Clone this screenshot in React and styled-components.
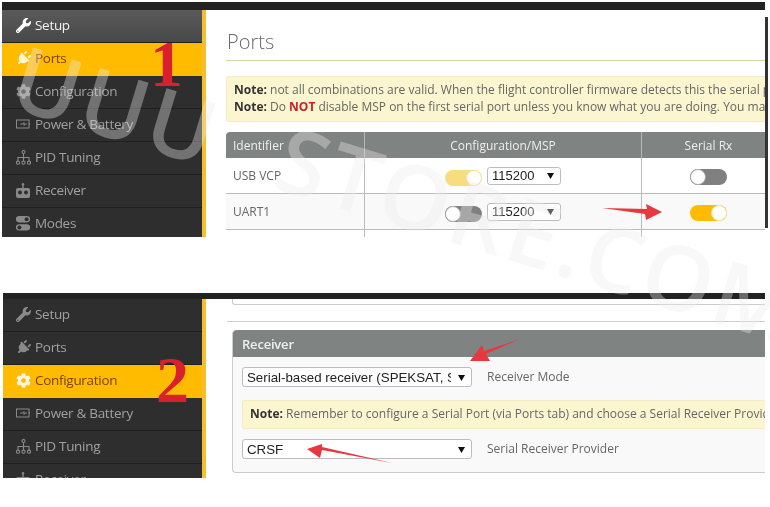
import React from "react";
import styled, { createGlobalStyle } from "styled-components";
import { FaWrench, FaPlug, FaCog } from "react-icons/fa";

const Global = createGlobalStyle`
  html, body { margin: 0; padding: 0; background: #fff; }
  body { font-family: "Open Sans", "Liberation Sans", sans-serif; color: #555; }
`;

const Page = styled.div`
  position: relative;
  width: 770px;
  height: 507px;
  overflow: hidden;
  background: #fff;
  padding-top: 2px;
  box-sizing: border-box;
  filter: blur(0.35px);
`;

const Shot = styled.section`
  position: relative;
  width: ${p => p.$w}px;
  height: ${p => p.$h}px;
  margin-left: ${p => p.$left}px;
  margin-top: ${p => p.$top || 0}px;
  display: flex;
  flex-direction: column;
  overflow: hidden;
  background: #fff;
`;

const TopBar = styled.div`
  flex: 0 0 ${p => p.$h}px;
  background: #222;
`;

const Body = styled.div`
  flex: 1;
  min-height: 0;
  display: flex;
`;

const Sidebar = styled.nav`
  flex: 0 0 ${p => p.$w}px;
  box-sizing: border-box;
  background: #2e2e2e;
  border-right: 4px solid #f6bd2f;
  overflow: hidden;
`;

const NavItem = styled.div`
  height: 30px;
  padding: 0 0 2px ${p => p.$inset}px;
  border-bottom: 1px solid ${p => (p.$active ? "#ffbb00" : "#1f1f1f")};
  display: flex;
  align-items: center;
  gap: 4px;
  font-size: 13.5px;
  letter-spacing: -0.3px;
  color: ${p => (p.$active ? "#7a4300" : p.$lit ? "#f2f2f2" : "#a0a0a0")};
  background: ${p => (p.$active ? "#ffbb00" : p.$lit ? "linear-gradient(#5a5a5a, #484848)" : "#2e2e2e")};
`;

const IconSlot = styled.span`
  flex: 0 0 16px;
  width: 16px;
  height: 16px;
  display: flex;
  align-items: center;
  justify-content: center;
  color: ${p => (p.$active ? "#fff6d8" : p.$lit ? "#fff" : "#8a8a8a")};
  font-size: 15px;
`;

const Content = styled.main`
  flex: 1;
  min-width: 0;
  padding: ${p => p.$pad};
  overflow: hidden;
  position: relative;
`;

const Title = styled.h1`
  margin: 0;
  padding: 0 0 4px 1px;
  height: 45px;
  box-sizing: border-box;
  display: flex;
  align-items: flex-end;
  font-size: 20px;
  font-weight: 300;
  line-height: 28px;
  color: #6a6a6a;
  border-bottom: 1px solid #d9d6a6;
`;

const Note = styled.div`
  box-sizing: border-box;
  white-space: nowrap;
  overflow: hidden;
  background: #fbf6d0;
  border: 1px solid #f2ecc4;
  border-right: 0;
  border-radius: 3px 0 0 3px;
  font-size: 12px;
  line-height: 16.5px;
  color: #666;
  padding: ${p => p.$pad};
  margin: ${p => p.$margin};
  height: ${p => p.$h}px;
  b { color: #333; font-weight: 700; }
  em { color: #c8202c; font-style: normal; font-weight: 700; }
`;

const PortsTable = styled.div`
  width: 549px;
  display: grid;
  grid-template-columns: 138px 277px 134px;
  border-radius: 4px 0 0 0;
  overflow: hidden;
`;

const HeadCell = styled.div`
  height: 26px;
  background: #7f8482;
  color: #eee;
  font-size: 12px;
  display: flex;
  align-items: center;
  justify-content: ${p => (p.$left ? "flex-start" : "center")};
  padding-left: ${p => (p.$left ? "7px" : "0")};
  border-left: ${p => (p.$left ? "0" : "1px solid #b5b8b6")};
  box-sizing: border-box;
`;

const Cell = styled.div`
  height: 36px;
  box-sizing: border-box;
  border-bottom: 1px solid #bbb;
  border-left: ${p => (p.$left ? "0" : "1px solid #bbb")};
  background: ${p => (p.$alt ? "#f9f9f9" : "#fff")};
  display: flex;
  align-items: center;
  justify-content: ${p => (p.$left ? "flex-start" : "center")};
  padding-left: ${p => (p.$left ? "7px" : "0")};
  font-size: 12px;
  color: #666;
  gap: 5px;
`;

const ToggleShell = styled.span`
  display: inline-block;
  position: relative;
  width: 37px;
  height: 16px;
  margin-top: ${p => p.$drop}px;
  border-radius: 8px;
  background: ${p => (p.$on ? (p.$pale ? "#f7dc80" : "#ffbb00") : "#808080")};
`;

const Knob = styled.span`
  position: absolute;
  top: 0;
  ${p => (p.$on ? "right: 0;" : "left: 0;")}
  width: 16px;
  height: 16px;
  border-radius: 50%;
  box-sizing: border-box;
  background: #fff;
  border: 1px solid ${p => (p.$on ? "#f5e3a5" : "#aaa")};
`;

const Toggle = ({ on, pale, drop = 4 }) => (
  <ToggleShell $on={on} $pale={pale} $drop={drop}>
    <Knob $on={on} />
  </ToggleShell>
);

const SelectBox = styled.div`
  box-sizing: border-box;
  width: ${p => p.$w}px;
  height: ${p => p.$h}px;
  flex: 0 0 auto;
  display: flex;
  align-items: center;
  background: #fff;
  border: 1px solid #bdbdbd;
  border-radius: 3px;
  padding: 0 6px 0 4px;
  font-family: "Liberation Sans", Arial, sans-serif;
  font-size: ${p => p.$size}px;
  color: #222;
  span { overflow: hidden; white-space: nowrap; flex: 1; }
  svg { flex: 0 0 7px; margin-left: 7px; }
`;

const Caret = () => (
  <svg width="7" height="7" viewBox="0 0 7 7"><path d="M0 1h7L3.5 7z" fill="#111" /></svg>
);

const Select = ({ w, h, size, children }) => (
  <SelectBox $w={w} $h={h} $size={size}>
    <span>{children}</span>
    <Caret />
  </SelectBox>
);

const ClippedBox = styled.div`
  height: 6px;
  margin-left: 5px;
  box-sizing: border-box;
  border: 1px solid #ccc;
  border-top: 0;
  border-right: 0;
  border-radius: 0 0 0 3px;
`;

const Rule = styled.hr`
  margin: 16px 0 8px;
  border: 0;
  border-top: 1px solid #ccc;
`;

const Panel = styled.div`
  margin-left: 5px;
  height: 143px;
  box-sizing: border-box;
  border: 1px solid #ccc;
  border-top: 0;
  border-right: 0;
  border-radius: 4px 0 0 4px;
  background: #f9f9f9;
`;

const PanelHead = styled.div`
  height: 27px;
  background: #7f8482;
  color: #f0f0f0;
  font-size: 13px;
  font-weight: 600;
  letter-spacing: -0.2px;
  display: flex;
  align-items: center;
  padding-left: 9px;
  border-radius: 4px 0 0 0;
`;

const FieldRow = styled.div`
  display: flex;
  align-items: center;
  gap: 15px;
  padding-left: 9px;
  margin-top: ${p => p.$top || 0}px;
  font-size: 12px;
  color: #666;
`;

const FieldLabel = styled.span`
  margin-bottom: 2px;
`;

const Watermark = styled.div`
  position: absolute;
  left: 30px;
  top: 30px;
  transform: rotate(17deg);
  transform-origin: 0 0;
  font-size: 90px;
  font-weight: 600;
  line-height: 1;
  white-space: pre;
  letter-spacing: 3px;
  word-spacing: 40px;
  color: rgba(235, 235, 235, 0.36);
  pointer-events: none;
`;

const Numeral = styled.div`
  position: absolute;
  left: ${p => p.$x}px;
  top: ${p => p.$y}px;
  font-family: "Liberation Serif", serif;
  font-size: 66px;
  font-weight: 700;
  line-height: 1;
  color: #d8212c;
  pointer-events: none;
`;

const Overlay = styled.svg`
  position: absolute;
  left: 0;
  top: 0;
  pointer-events: none;
`;

const EdgeStrip = styled.div`
  position: absolute;
  left: 765px;
  top: 17px;
  width: 3px;
  height: 211px;
  background: #333;
`;

const TiltedPlug = styled(FaPlug)`
  transform: rotate(45deg);
`;

const Battery = () => (
  <svg width="15" height="10" viewBox="0 0 15 10" fill="none" stroke="currentColor">
    <rect x="0.5" y="1" width="12.5" height="8" />
    <path d="M13.5 4v2M4 5h3l1-1.5v3L9 5h2" strokeWidth="0.9" />
  </svg>
);

const Tree = () => (
  <svg width="15" height="15" viewBox="0 0 15 15" fill="none" stroke="currentColor" strokeWidth="1.1">
    <circle cx="7.5" cy="2" r="1.5" />
    <path d="M7.5 3.5V11M2 11V7.5h11V11" />
    <circle cx="2" cy="12.7" r="1.6" />
    <circle cx="7.5" cy="12.7" r="1.6" />
    <circle cx="13" cy="12.7" r="1.6" />
  </svg>
);

const Remote = () => (
  <svg width="14" height="15" viewBox="0 0 14 15" fill="currentColor">
    <circle cx="7" cy="1.2" r="1.2" />
    <rect x="6.3" y="1" width="1.4" height="4" />
    <path d="M2 5h10a2 2 0 0 1 2 2v6a2 2 0 0 1-2 2H2a2 2 0 0 1-2-2V7a2 2 0 0 1 2-2z" />
    <circle cx="4" cy="9.5" r="2" fill="#2e2e2e" />
    <circle cx="10" cy="9.5" r="2" fill="#2e2e2e" />
  </svg>
);

const Switches = () => (
  <svg width="14" height="15" viewBox="0 0 14 15" fill="currentColor">
    <path d="M3 0h8a3 3 0 0 1 0 6.4H3A3 3 0 0 1 3 0z" />
    <circle cx="10.6" cy="3.2" r="2" fill="#2e2e2e" />
    <path d="M3 8.2h8a3 3 0 0 1 0 6.4H3a3 3 0 0 1 0-6.4z" />
    <circle cx="3.4" cy="11.4" r="2" fill="#2e2e2e" />
  </svg>
);

const navItems = [
  { label: "Setup", Icon: FaWrench },
  { label: "Ports", Icon: TiltedPlug },
  { label: "Configuration", Icon: FaCog },
  { label: "Power & Battery", Icon: Battery },
  { label: "PID Tuning", Icon: Tree },
  { label: "Receiver", Icon: Remote },
  { label: "Modes", Icon: Switches },
];

const Nav = ({ active, lit, width, inset }) => (
  <Sidebar $w={width}>
    {navItems.map(({ label, Icon }) => (
      <NavItem key={label} $active={label === active} $lit={label === lit} $inset={inset}>
        <IconSlot $active={label === active} $lit={label === lit}><Icon /></IconSlot>
        {label}
      </NavItem>
    ))}
  </Sidebar>
);

export default function App() {
  return (
    <Page>
      <Global />
      <Shot $w={763} $h={235} $left={2}>
        <TopBar $h={8} />
        <Body>
          <Nav active="Ports" lit="Setup" width={204} inset={13} />
          <Content $pad="6px 0 0 20px">
            <Title>Ports</Title>
            <Note $pad="5px 7px" $margin="15px 0 10px" $h={46}>
              <div><b>Note:</b> not all combinations are valid. When the flight controller firmware detects this the serial port configuration will be reset.</div>
              <div><b>Note:</b> Do <em>NOT</em> disable MSP on the first serial port unless you know what you are doing. You may have to reflash and erase your configuration if you do.</div>
            </Note>
            <PortsTable>
              <HeadCell $left>Identifier</HeadCell>
              <HeadCell>Configuration/MSP</HeadCell>
              <HeadCell>Serial Rx</HeadCell>
              <Cell $left>USB VCP</Cell>
              <Cell><Toggle on pale /><Select w={74} h={18} size={13}>115200</Select></Cell>
              <Cell><Toggle drop={2} /></Cell>
              <Cell $left $alt>UART1</Cell>
              <Cell $alt><Toggle /><Select w={74} h={18} size={13}>115200</Select></Cell>
              <Cell $alt><Toggle on drop={2} /></Cell>
              <Cell $left />
              <Cell />
              <Cell />
            </PortsTable>
          </Content>
        </Body>
      </Shot>
      <Shot $w={762} $h={185} $left={3} $top={56}>
        <TopBar $h={6} />
        <Body>
          <Nav active="Configuration" width={203} inset={12} />
          <Content $pad="0 0 0 21px">
            <ClippedBox />
            <Rule />
            <Panel>
              <PanelHead>Receiver</PanelHead>
              <FieldRow $top={10}>
                <Select w={230} h={20} size={13.3}>Serial-based receiver (SPEKSAT, SBUS, SUMD)</Select>
                <FieldLabel>Receiver Mode</FieldLabel>
              </FieldRow>
              <Note $pad="5px 7px" $margin="13px 0 10px 9px" $h={29}>
                <b>Note:</b> Remember to configure a Serial Port (via Ports tab) and choose a Serial Receiver Provider when using Serial-based receiver.
              </Note>
              <FieldRow>
                <Select w={230} h={20} size={13.3}>CRSF</Select>
                <FieldLabel>Serial Receiver Provider</FieldLabel>
              </FieldRow>
            </Panel>
          </Content>
        </Body>
      </Shot>
      <EdgeStrip />
      <Watermark>UUU STORE.COM</Watermark>
      <Numeral $x={150} $y={31}>1</Numeral>
      <Numeral $x={156} $y={347}>2</Numeral>
      <Overlay width="770" height="507" viewBox="0 0 770 507">
        <g fill="#e8383f">
          <path d="M602 208L647 209L646 204L662 212L646 220L645 214Z" />
          <path d="M520 339L486 354L490 361L470 361L482 345L484 351Z" />
          <path d="M392 463L322 450L320 458L307 449L322 444L322 447Z" />
        </g>
      </Overlay>
    </Page>
  );
}
